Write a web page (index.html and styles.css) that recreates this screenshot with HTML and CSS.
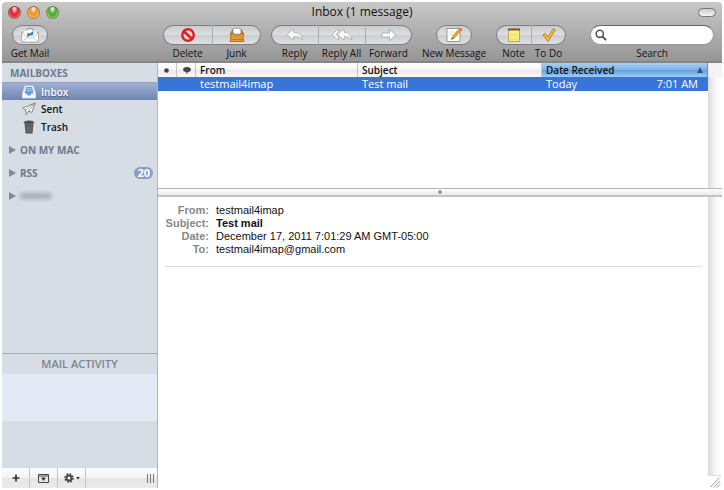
FILE: index.html
```html
<!DOCTYPE html>
<html lang="en">
<head>
    <meta charset="utf-8">
    <title>Inbox (1 message)</title>
    <link rel="stylesheet" href="styles.css">
</head>
<body>
<div class="window">
    <header class="top">
        <div class="titlebar">
            <div class="lights">
                <button class="light red" aria-label="Close"></button>
                <button class="light yellow" aria-label="Minimize"></button>
                <button class="light green" aria-label="Zoom"></button>
            </div>
            <h1>Inbox (1 message)</h1>
            <div class="titlebar-end"><button class="pill" aria-label="Toggle toolbar"></button></div>
        </div>
        <div class="toolbar">
            <div class="group get-mail">
                <button class="tool">
                    <span class="cap"><svg width="20" height="16" viewBox="0 0 20 16"><path d="M1.500 6L10 .8 18.500 6v9h-17z" fill="#e9e9e9" stroke="#8d8d8d"/><path d="M3.500 3.500h13V10L10 12l-6.500-2z" fill="#fff"/><path d="M7.500 6l2.500.5 3.500-2.500-.5 4-3 .5-2.500 1.500z" fill="#4d83d0"/><path d="M1.500 6.500L10 11.500l8.500-5V15h-17z" fill="#fbfbfb" stroke="#aaa" stroke-width=".6"/><path d="M7.500 6l2.500.5 3.500-2.500-.5 4-3 .5-2.500 1.500z" fill="#4d83d0"/><path d="M2 15l6-5M18 15l-6-5" stroke="#bbb" stroke-width=".7"/></svg></span>
                    <span class="label">Get Mail</span>
                </button>
            </div>
            <div class="group wide">
                <button class="tool">
                    <span class="cap"><svg width="16" height="16" viewBox="0 0 16 16"><circle cx="8" cy="8" r="5.700" fill="#eadada" stroke="#e11b22" stroke-width="2.400"/><path d="M4 4.500l8 7.500" stroke="#e11b22" stroke-width="2.400"/></svg></span>
                    <span class="label">Delete</span>
                </button>
                <button class="tool">
                    <span class="cap"><svg width="16" height="16" viewBox="0 0 16 16"><path d="M1.500 6.500L3 2.500h10l1.500 4z" fill="#b86d1d"/><path d="M4 7V2l1-.8h5L12 3v4z" fill="#fff" stroke="#7d8a90" stroke-width=".7"/><path d="M1 6.500h3.500l1 1.500h5l1-1.500H15L14 10l.8 4.500H1.200L2 10z" fill="#e29a38" stroke="#a65f13" stroke-width=".8"/><path d="M2.500 12.500h11" stroke="#c47b24"/></svg></span>
                    <span class="label">Junk</span>
                </button>
            </div>
            <div class="group reply">
                <button class="tool">
                    <span class="cap"><svg width="18" height="14" viewBox="0 0 18 14"><path d="M1 6.500L7.500 1v3.300c5 .2 8 2.700 9 7.700-2.400-3-4.500-3.500-9-3.400V12z" fill="#fff" stroke="#999" stroke-width=".6"/></svg></span>
                    <span class="label">Reply</span>
                </button>
                <button class="tool">
                    <span class="cap"><svg width="22" height="14" viewBox="0 0 22 14"><path d="M1 6.500L7.500 1v3L5 6.500l2.500 2.600V12z" fill="#fff" stroke="#999" stroke-width=".6"/><path d="M6.500 6.500L13 1v3.300c4.500.2 7 2.700 8 7.700-2.400-3-4-3.500-8-3.400V12z" fill="#fff" stroke="#999" stroke-width=".6"/></svg></span>
                    <span class="label">Reply All</span>
                </button>
                <button class="tool">
                    <span class="cap"><svg width="16" height="14" viewBox="0 0 16 14"><path d="M1 5h7.500V1.500L15 7l-6.500 5.500V9H1z" fill="#fff" stroke="#999" stroke-width=".7"/></svg></span>
                    <span class="label">Forward</span>
                </button>
            </div>
            <div class="group compose">
                <button class="tool">
                    <span class="cap"><svg width="18" height="16" viewBox="0 0 18 16"><path d="M2 1.500h13v13H2z" fill="#fff" stroke="#999"/><path d="M4 5h6M4 8h4" stroke="#ddd"/><path d="M6.500 12.500l1-3.200 7-8 2 1.900-7 7.800z" fill="#f3a323" stroke="#b8741b" stroke-width=".5"/><path d="M14 1.900l1-1.200 2.200 1.900-1.100 1.200z" fill="#d9634c"/><path d="M6.500 12.500l.6-1.700 1.100 1z" fill="#333"/></svg></span>
                    <span class="label">New Message</span>
                </button>
            </div>
            <div class="group notes">
                <button class="tool">
                    <span class="cap"><svg width="14" height="14" viewBox="0 0 14 14"><path d="M1.500 1h11v12.500h-11z" fill="#fbee83" stroke="#a49a4b" stroke-width=".8"/><path d="M1 .5h12v2H1z" fill="#74572d"/><path d="M3 6.500h8M3 9h8M3 11.500h8" stroke="#e3d366" stroke-width=".6"/></svg></span>
                    <span class="label">Note</span>
                </button>
                <button class="tool">
                    <span class="cap"><svg width="14" height="16" viewBox="0 0 14 16"><path d="M1 8l2.200-1.700L5.500 10 11.500 1.500 13.300 3 6 14.500z" fill="#f8bd31" stroke="#a87416" stroke-width=".8"/></svg></span>
                    <span class="label">To Do</span>
                </button>
            </div>
            <div class="search">
                <div class="search-box">
                    <svg width="12" height="12" viewBox="0 0 12 12"><circle cx="4.800" cy="4.800" r="3.600" fill="none" stroke="#555" stroke-width="1.600"/><path d="M7.500 7.500l3.600 3.600" stroke="#555" stroke-width="2"/></svg>
                    <input type="search" id="search">
                </div>
                <label class="label" for="search">Search</label>
            </div>
        </div>
    </header>

    <div class="content">
        <aside class="sidebar">
            <nav class="mailboxes">
                <h2>MAILBOXES</h2>
                <a class="box selected" href="#inbox"><svg width="14" height="14" viewBox="0 0 14 14"><path d="M3 1h8l2.500 7.500V13H.5V8.500z" fill="#f4f8fd" stroke="#dce6f4" stroke-width=".8"/><path d="M4 2h6l1.500 6.500H9.500l-1 2h-3l-1-2h-2z" fill="#6d9bd8"/><path d="M4.500 3.500h5M4 5.500h6" stroke="#a9c6ed"/></svg>Inbox</a>
                <a class="box" href="#sent"><svg width="14" height="14" viewBox="0 0 14 14"><path d="M.8 6L13.300 1l-3.500 9.500L6.700 9l-2.500 4-.5-5z" fill="#fff" stroke="#777" stroke-width=".9"/><path d="M3.700 8l9.300-6.700L6.700 9" fill="none" stroke="#888" stroke-width=".7"/></svg>Sent</a>
                <a class="box" href="#trash"><svg width="14" height="14" viewBox="0 0 14 14"><path d="M2.500 3h9l-1 10.500h-7z" fill="#555"/><ellipse cx="7" cy="2.500" rx="5" ry="1.800" fill="#444" stroke="#888" stroke-width=".8"/><path d="M5 6v6M7 6v6M9 6v6" stroke="#888" stroke-width=".7"/></svg>Trash</a>
                <a class="section" href="#mac"><i class="arrow"></i>ON MY MAC</a>
                <a class="section" href="#rss"><i class="arrow"></i>RSS<span class="badge">20</span></a>
                <a class="section" href="#account" aria-label="Account"><i class="arrow"></i><span class="hidden-name"></span></a>
            </nav>
            <section class="activity">
                <h2>MAIL ACTIVITY</h2>
                <div class="activity-list"></div>
            </section>
            <footer class="actions">
                <button aria-label="Add mailbox"><svg width="8" height="8" viewBox="0 0 8 8"><path d="M4 .5v7M.5 4h7" stroke="#333" stroke-width="1.700"/></svg></button>
                <button aria-label="Show activity"><svg width="11" height="9" viewBox="0 0 11 9"><path d="M.5.500h10v8H.5zM.5 2h10" fill="none" stroke="#444"/><path d="M3 3.500h5L5.500 7z" fill="#333"/></svg></button>
                <button aria-label="Actions"><svg width="16" height="10" viewBox="0 0 16 10"><circle cx="5" cy="5" r="2.500" fill="none" stroke="#444" stroke-width="1.800"/><circle cx="5" cy="5" r="4" fill="none" stroke="#444" stroke-width="1.600" stroke-dasharray="1.700 1.440"/><path d="M12 4h4l-2 2.500z" fill="#333"/></svg></button>
                <span class="grip"></span>
            </footer>
        </aside>

        <main class="main">
            <div class="pane list">
                <div class="table-wrap">
                    <table class="messages">
                        <thead>
                            <tr>
                                <th class="mark" aria-label="Status"><svg width="5" height="5" viewBox="0 0 5 5"><circle cx="2.500" cy="2.500" r="2.300" fill="#444"/></svg></th>
                                <th class="mark" aria-label="Chat"><svg width="8" height="7" viewBox="0 0 8 7"><ellipse cx="4" cy="2.600" rx="3.900" ry="2.500" fill="#444"/><path d="M3 4h3L3.500 7z" fill="#444"/></svg></th>
                                <th class="from">From</th>
                                <th class="subject">Subject</th>
                                <th class="date"><div class="split">Date Received<i class="sort"></i></div></th>
                            </tr>
                        </thead>
                        <tbody>
                            <tr>
                                <td></td>
                                <td></td>
                                <td>testmail4imap</td>
                                <td>Test mail</td>
                                <td><div class="split">Today<span>7:01 AM</span></div></td>
                            </tr>
                        </tbody>
                    </table>
                </div>
                <div class="scroll headed"></div>
            </div>
            <div class="divider"></div>
            <div class="pane reader">
                <article class="message">
                    <dl>
                        <dt>From:</dt><dd>testmail4imap</dd>
                        <dt>Subject:</dt><dd><b>Test mail</b></dd>
                        <dt>Date:</dt><dd>December 17, 2011 7:01:29 AM GMT-05:00</dd>
                        <dt>To:</dt><dd>testmail4imap@gmail.com</dd>
                    </dl>
                </article>
                <div class="scroll-column">
                    <div class="scroll"></div>
                    <svg class="resize" width="13" height="13" viewBox="0 0 13 13"><path d="M2 12L12 2M5.500 12.500l7-7M9 12.500L12.500 9" stroke="#888"/></svg>
                </div>
            </div>
        </main>
    </div>
</div>
</body>
</html>
```
FILE: styles.css
```css
* {
    box-sizing: border-box;
}

body {
    margin: 0;
    padding: 2px;
    background: #fff;
    font-family: "Open Sans", "Noto Sans", sans-serif;
    font-size: 11px;
    color: #111;
}

button {
    border: 0;
    padding: 0;
    background: none;
    font: inherit;
    color: inherit;
}

svg {
    display: block;
    flex-shrink: 0;
}

h1, h2, dl, dd {
    margin: 0;
}

a {
    color: inherit;
    text-decoration: none;
}

.window {
    display: flex;
    flex-direction: column;
    height: calc(100vh - 4px);
}

/* title bar and toolbar */
.top {
    height: 61px;
    background: linear-gradient(#c8c8c8, #969696);
    border-bottom: 2px solid #858585;
    border-radius: 4px 4px 0 0;
}

.titlebar {
    display: flex;
    align-items: center;
    height: 20px;
    padding: 0 6px;
}

.lights, .titlebar-end {
    flex: 1;
    display: flex;
    gap: 6px;
}

.titlebar-end {
    justify-content: flex-end;
}

.light {
    width: 13px;
    height: 13px;
    border-radius: 50%;
    border: 1px solid #5559;
}

.red {
    background: radial-gradient(ellipse at 50% 15%, #fff 0, #f5a5a5 15%, #e0202c 45%, #ff8d8d 100%);
}

.yellow {
    background: radial-gradient(ellipse at 50% 15%, #fff 0, #f9cf9c 15%, #f08c28 45%, #ffe88a 100%);
}

.green {
    background: radial-gradient(ellipse at 50% 15%, #fff 0, #b9e2a0 15%, #4ea22c 45%, #b6f283 100%);
}

h1 {
    font-size: 12px;
    font-weight: 500;
    line-height: 20px;
}

.pill {
    width: 18px;
    height: 9px;
    border: 1px solid #777;
    border-radius: 5px;
    background: linear-gradient(#ccc, #f4f4f4);
}

.toolbar {
    display: flex;
    padding: 3px 8px 0 10px;
}

.group {
    display: flex;
    flex-shrink: 0;
    margin-right: 24px;
}

.get-mail {
    margin-right: 115px;
}

.wide {
    margin-right: 10px;
}

.tool {
    display: flex;
    flex-direction: column;
    align-items: center;
    width: 36px;
}

.wide .tool {
    width: 49px;
}

.reply .tool {
    width: 47px;
}

.notes .tool {
    width: 35px;
}

.cap {
    display: flex;
    align-items: center;
    justify-content: center;
    width: 100%;
    height: 20px;
    border: 1px solid #7f7f82;
    border-left-color: #aaacb0;
    border-right-width: 0;
    background: linear-gradient(#c9cbce, #dcdee1 48%, #cbcdd1 52%, #dfe1e4);
}

.tool:first-child .cap {
    border-left-color: #7f7f82;
    border-radius: 10px 0 0 10px;
}

.tool:last-child .cap {
    border-right-width: 1px;
    border-radius: 0 10px 10px 0;
}

.tool:only-child .cap {
    border-radius: 10px;
}

.label {
    font-size: 10px;
    font-weight: 500;
    line-height: 16px;
    white-space: nowrap;
}

.search {
    flex: 1;
    min-width: 0;
    display: flex;
    flex-direction: column;
    align-items: center;
}

.search-box {
    display: flex;
    align-items: center;
    width: 100%;
    height: 20px;
    padding: 0 4px;
    border: 1px solid #999;
    border-top-color: #666;
    border-radius: 10px;
    background: #fff;
}

.search-box input {
    flex: 1;
    min-width: 0;
    border: 0;
    outline: 0;
    background: none;
    font: inherit;
}

/* sidebar */
.content {
    flex: 1;
    display: flex;
    min-height: 0;
}

.sidebar {
    display: flex;
    flex-direction: column;
    width: 156px;
    border-right: 1px solid #b4b4b4;
    background: #d6dde5;
}

.mailboxes {
    flex: 1;
    padding-top: 1px;
    font-size: 10px;
}

h2 {
    font-size: 11px;
    font-weight: 600;
    line-height: 20px;
    text-align: center;
    color: #7d8590;
}

.mailboxes h2 {
    padding-left: 8px;
    font-size: 10px;
    font-weight: 700;
    line-height: 18px;
    text-align: left;
    color: #6c798a;
}

.box {
    display: flex;
    align-items: center;
    gap: 5px;
    height: 18px;
    padding-left: 20px;
    font-weight: 600;
}

.selected {
    background: linear-gradient(#a0b0d2, #7085b1);
    border-top: 1px solid #91a2c6;
    color: #fff;
    text-shadow: 0 1px 1px #4a5d88;
}

.section {
    display: flex;
    align-items: center;
    height: 23px;
    padding: 0 4px 0 7px;
    font-weight: 700;
    color: #6c798a;
}

.box + .section {
    margin-top: 2px;
}

.arrow {
    margin-right: 4px;
    border-left: 7px solid #818c99;
    border-top: 4px solid transparent;
    border-bottom: 4px solid transparent;
}

.badge {
    margin-left: auto;
    padding: 0 3px;
    border-radius: 6px;
    background: #8a9dc5;
    color: #fff;
    font-size: 11px;
    line-height: 12px;
}

.hidden-name {
    width: 31px;
    height: 6px;
    background: #a3acb8;
    filter: blur(2px);
}

.activity {
    height: 115px;
    border-top: 1px solid #a5a9b0;
}

.activity-list {
    height: 47px;
    background: #e3eaf5;
}

.actions {
    display: flex;
    align-items: center;
    height: 20px;
    background: linear-gradient(#fdfdfd, #f3f3f3 50%, #e5e5e5 50%, #ebebeb);
}

.actions button {
    display: flex;
    align-items: center;
    justify-content: center;
    width: 28px;
    height: 20px;
    border-right: 1px solid #c4c4c4;
}

.grip {
    width: 7px;
    height: 9px;
    margin: 0 3px 0 auto;
    background: repeating-linear-gradient(90deg, #777 0 1px, transparent 1px 3px);
}

/* message list */
.main {
    flex: 1;
    display: flex;
    flex-direction: column;
    min-width: 0;
}

.pane {
    display: flex;
}

.list {
    height: 125px;
}

.table-wrap {
    flex: 1;
}

.messages {
    width: 100%;
    table-layout: fixed;
    border-collapse: separate;
    border-spacing: 0;
}

.messages th, .messages td {
    height: 14px;
    padding: 0 4px;
    line-height: 14px;
    text-align: left;
}

.messages th {
    border-right: 1px solid #c4c4c4;
    background: linear-gradient(#fff, #f5f5f5 50%, #e9e9e9 50%, #f8f8f8);
    font-size: 10px;
    font-weight: 600;
}

.messages .mark {
    width: 19px;
    padding: 0 6px;
}

.messages .from {
    width: 162px;
}

.messages .subject {
    width: 184px;
}

.messages .date {
    border-right-color: #5c93d2;
    background: linear-gradient(#a9d0f2, #7ab1e8 50%, #5f9fe0 50%, #9fccf3);
}

.messages td {
    background: #3875d7;
    color: #fff;
}

.split {
    display: flex;
    align-items: center;
    justify-content: space-between;
}

.messages td .split {
    padding-right: 6px;
}

.sort {
    border-bottom: 6px solid #2f557d;
    border-left: 3px solid transparent;
    border-right: 3px solid transparent;
}

.scroll {
    width: 14px;
    border-left: 1px solid #ddd;
    background: linear-gradient(90deg, #dedede, #f7f7f7 50%, #fff);
}

.headed {
    border-top: 14px solid #f4f4f4;
}

.divider {
    height: 9px;
    border-top: 1px solid #b5b5b5;
    border-bottom: 2px solid #c3c3c3;
    background: radial-gradient(circle, #999 0 2px, transparent 2px), linear-gradient(#fff, #e9e9e9);
}

/* message headers */
.reader {
    flex: 1;
}

.message {
    flex: 1;
    padding: 7px 6px 0 7px;
    font-family: "Liberation Sans", Arial, sans-serif;
}

.message dl {
    display: grid;
    grid-template-columns: 44px 1fr;
    column-gap: 7px;
    line-height: 13px;
    padding-bottom: 10px;
    border-bottom: 1px solid #ddd;
}

.message dt {
    text-align: right;
    font-weight: 700;
    color: #888;
}

.scroll-column {
    display: flex;
    flex-direction: column;
}

.scroll-column .scroll {
    flex: 1;
}

.resize {
    border-top: 1px solid #ddd;
}
```
